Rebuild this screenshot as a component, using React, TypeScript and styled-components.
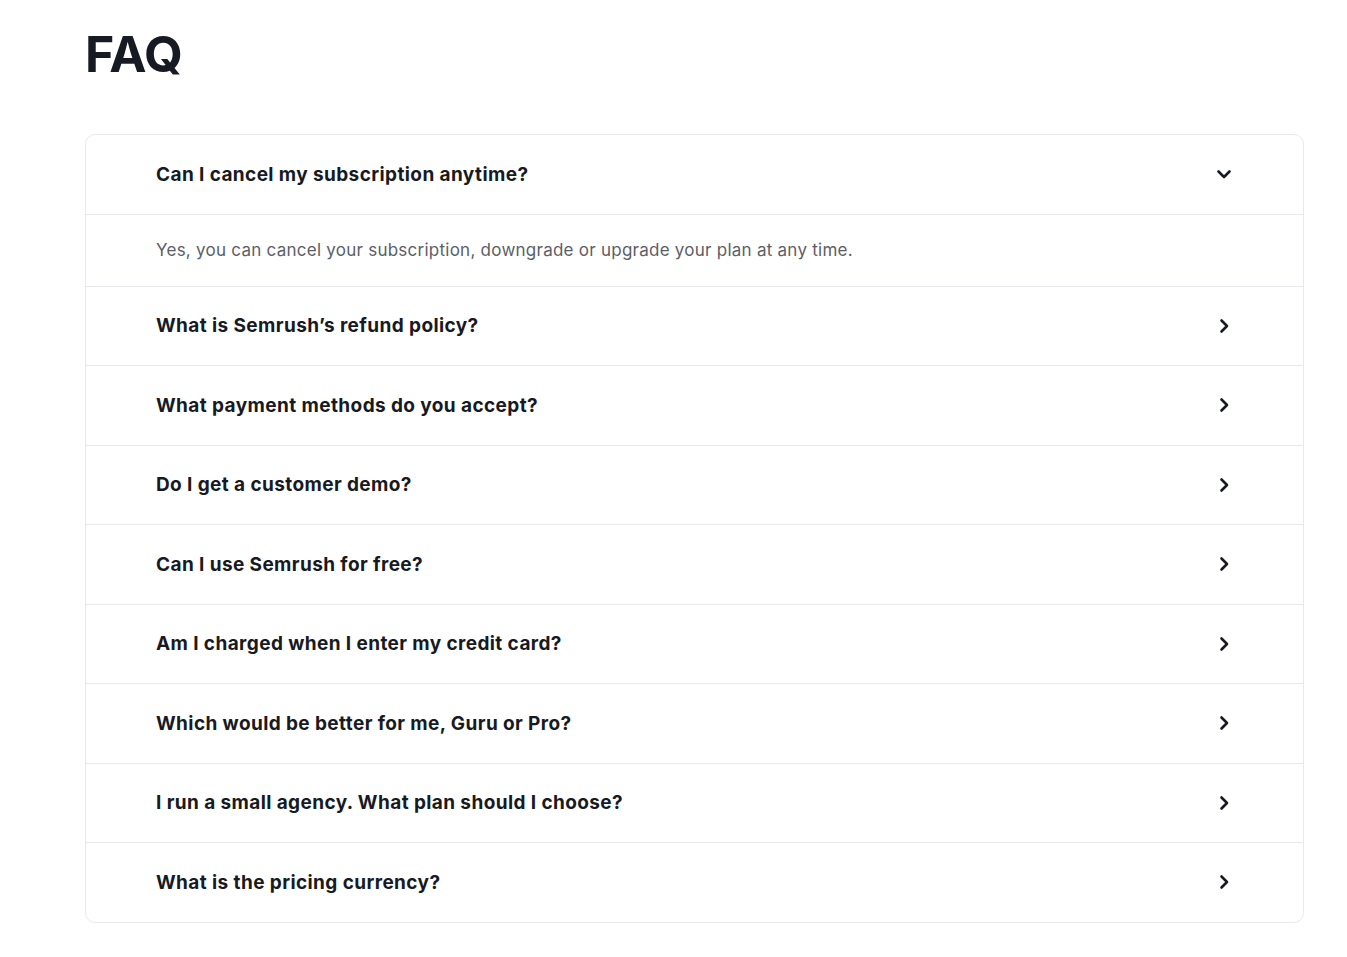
import React, { useState } from 'react';
import styled, { createGlobalStyle } from 'styled-components';

const QUESTIONS = [
  {
    q: 'Can I cancel my subscription anytime?',
    a: 'Yes, you can cancel your subscription, downgrade or upgrade your plan at any time.',
  },
  { q: 'What is Semrush’s refund policy?', a: '' },
  { q: 'What payment methods do you accept?', a: '' },
  { q: 'Do I get a customer demo?', a: '' },
  { q: 'Can I use Semrush for free?', a: '' },
  { q: 'Am I charged when I enter my credit card?', a: '' },
  { q: 'Which would be better for me, Guru or Pro?', a: '' },
  { q: 'I run a small agency. What plan should I choose?', a: '' },
  { q: 'What is the pricing currency?', a: '' },
];

const GlobalStyle = createGlobalStyle`
  body {
    margin: 0;
    background: #ffffff;
    font-family: Inter, "Noto Sans", sans-serif;
    color: #171a22;
  }
`;

function Chevron({ open }: { open: boolean }) {
  return (
    <svg width="16" height="16" viewBox="0 0 16 16" fill="none">
      {open ? (
        <path d="M2.5 5.5 L8 11 L13.5 5.5" stroke="#171a22" strokeWidth="2.6" strokeLinecap="round" strokeLinejoin="round" />
      ) : (
        <path d="M5.5 2.5 L11 8 L5.5 13.5" stroke="#171a22" strokeWidth="2.6" strokeLinecap="round" strokeLinejoin="round" />
      )}
    </svg>
  );
}

export default function App() {
  const [open, setOpen] = useState(0);

  return (
    <Page>
      <GlobalStyle />
      <Title>FAQ</Title>
      <Card>
        {QUESTIONS.map((item, index) => (
          <Item key={item.q}>
            <Question onClick={() => setOpen(open === index ? -1 : index)}>
              <span>{item.q}</span>
              <IconBox>
                <Chevron open={open === index} />
              </IconBox>
            </Question>
            {open === index && <Answer>{item.a}</Answer>}
          </Item>
        ))}
      </Card>
    </Page>
  );
}

const Page = styled.div`
  padding: 24px 43px 34px 85px;
`;

const Title = styled.h1`
  margin: 0 0 50px;
  font-size: 50px;
  line-height: 60px;
  font-weight: 700;
  letter-spacing: -0.5px;
  color: #171a22;
`;

const Card = styled.div`
  border: 1px solid #e8e9ed;
  border-radius: 10px;
  overflow: hidden;
`;

const Item = styled.div`
  & + & {
    border-top: 1px solid #e8e9ed;
  }
`;

const Question = styled.div`
  display: flex;
  align-items: center;
  justify-content: space-between;
  height: 78.5px;
  padding: 0 71px 0 70px;
  font-size: 19px;
  font-weight: 700;
  letter-spacing: 0.4px;
  color: #171a22;
  cursor: pointer;
`;

const IconBox = styled.span`
  display: flex;
  align-items: center;
  justify-content: center;
  width: 16px;
  height: 16px;
`;

const Answer = styled.div`
  display: flex;
  align-items: center;
  height: 71px;
  padding: 0 70px;
  border-top: 1px solid #e8e9ed;
  font-size: 17px;
  letter-spacing: 0.25px;
  color: #5b5e66;
`;
